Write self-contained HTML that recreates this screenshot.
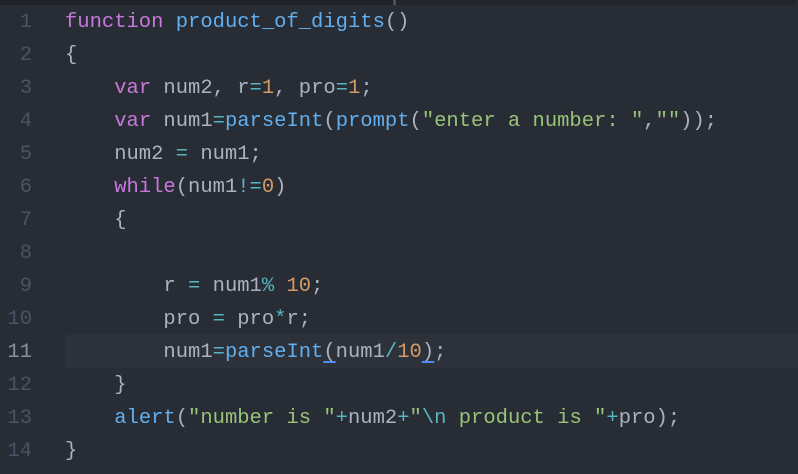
<!DOCTYPE html>
<html><head><meta charset="utf-8"><style>
html,body{margin:0;padding:0;}
body{width:798px;height:474px;background:#282c34;overflow:hidden;position:relative;font-family:"Liberation Mono",monospace;font-size:20.5px;}
.top{position:absolute;left:0;top:0;width:393px;height:5px;background:#1f2228;}
.top2{position:absolute;left:396px;top:0;width:400px;height:5px;background:#21252b;}
.tick{position:absolute;left:393px;top:0;width:3px;height:5px;background:#4b5060;}
.hl{position:absolute;left:65px;top:335px;width:733px;height:33px;background:#2c313a;}
.ln{position:absolute;left:0;width:32px;text-align:right;color:#4b5263;}
.c{position:absolute;left:65px;white-space:pre;color:#abb2bf;}
.k{color:#c678dd}.f{color:#61afef}.n{color:#d19a66}.s{color:#98c379}.o{color:#56b6c2}
.u{text-decoration:underline;text-decoration-color:#528bff;text-underline-offset:4px;text-decoration-thickness:2px}
</style></head><body>
<div class="top"></div><div class="tick"></div><div class="top2"></div>
<div class="hl"></div>
<div class="ln" style="top:11px">1</div><div class="c" style="top:11px"><span class="k">function</span> <span class="f">product_of_digits</span>()</div>
<div class="ln" style="top:44px">2</div><div class="c" style="top:44px">{</div>
<div class="ln" style="top:77px">3</div><div class="c" style="top:77px">    <span class="k">var</span> num2, r<span class="o">=</span><span class="n">1</span>, pro<span class="o">=</span><span class="n">1</span>;</div>
<div class="ln" style="top:110px">4</div><div class="c" style="top:110px">    <span class="k">var</span> num1<span class="o">=</span><span class="f">parseInt</span>(<span class="f">prompt</span>(<span class="s">"enter a number: "</span>,<span class="s">""</span>));</div>
<div class="ln" style="top:143px">5</div><div class="c" style="top:143px">    num2 <span class="o">=</span> num1;</div>
<div class="ln" style="top:176px">6</div><div class="c" style="top:176px">    <span class="k">while</span>(num1<span class="o">!=</span><span class="n">0</span>)</div>
<div class="ln" style="top:209px">7</div><div class="c" style="top:209px">    {</div>
<div class="ln" style="top:242px">8</div>
<div class="ln" style="top:275px">9</div><div class="c" style="top:275px">        r <span class="o">=</span> num1<span class="o">%</span> <span class="n">10</span>;</div>
<div class="ln" style="top:308px">10</div><div class="c" style="top:308px">        pro <span class="o">=</span> pro<span class="o">*</span>r;</div>
<div class="ln" style="top:341px;color:#8a909c">11</div><div class="c" style="top:341px">        num1<span class="o">=</span><span class="f">parseInt</span><span class="u">(</span>num1<span class="o">/</span><span class="n">10</span><span class="u">)</span>;</div>
<div class="ln" style="top:374px">12</div><div class="c" style="top:374px">    }</div>
<div class="ln" style="top:407px">13</div><div class="c" style="top:407px">    <span class="f">alert</span>(<span class="s">"number is "</span><span class="o">+</span>num2<span class="o">+</span><span class="s">"</span><span class="o">\n</span><span class="s"> product is "</span><span class="o">+</span>pro);</div>
<div class="ln" style="top:440px">14</div><div class="c" style="top:440px">}</div>
</body></html>
